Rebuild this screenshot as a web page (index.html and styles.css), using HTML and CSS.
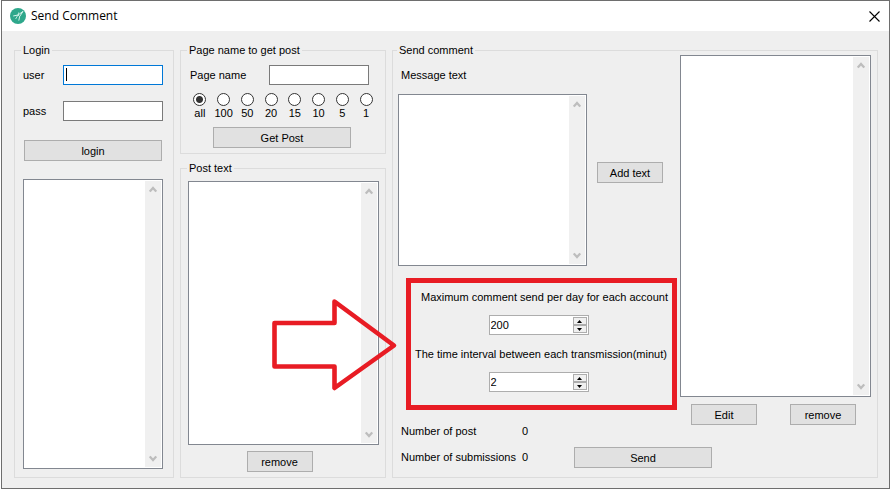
FILE: index.html
```html
<!DOCTYPE html>
<html lang="en">
<head>
    <meta charset="utf-8">
    <title>Send Comment</title>
    <link rel="stylesheet" href="styles.css">
</head>
<body>
    <svg class="defs" width="0" height="0">
        <symbol id="up" viewBox="0 0 8 7"><path d="M0.8 5.6 L4 2 L7.2 5.6" fill="none" stroke="#bdbdbd" stroke-width="2.2"/></symbol>
        <symbol id="down" viewBox="0 0 8 7"><path d="M0.8 1.4 L4 5 L7.2 1.4" fill="none" stroke="#bdbdbd" stroke-width="2.2"/></symbol>
    </svg>
    <div class="window">
        <header class="titlebar">
            <svg class="logo" viewBox="0 0 16 16">
                <circle cx="8" cy="8" r="8" fill="#2ea78b"/>
                <path d="M3.2 8 L8 7 L13 3.4 L9.6 8.6 L8.8 12.6" fill="none" stroke="#d5f3ea" stroke-width="1"/>
                <path d="M8.8 4.4 L8 7 L9.6 8.6 M8 7 L5.6 11" fill="none" stroke="#d5f3ea" stroke-width="0.8"/>
            </svg>
            <h1>Send Comment</h1>
            <button class="close" aria-label="Close">
                <svg width="11" height="11" viewBox="0 0 11 11"><path d="M0.5 0.5 L10.5 10.5 M10.5 0.5 L0.5 10.5" stroke="#000" stroke-width="1.1"/></svg>
            </button>
        </header>

        <main class="content">
            <fieldset class="group login">
                <legend>Login</legend>
                <div class="row">
                    <label for="user">user</label>
                    <input type="text" id="user" class="text active">
                </div>
                <div class="row">
                    <label for="pass">pass</label>
                    <input type="password" id="pass" class="text">
                </div>
                <button class="btn">login</button>
                <div class="box">
                    <select size="2" aria-label="Accounts"></select>
                    <div class="bar"><svg><use href="#up"/></svg><svg><use href="#down"/></svg></div>
                </div>
            </fieldset>

            <div class="middle">
                <fieldset class="group page">
                    <legend>Page name to get post</legend>
                    <div class="row">
                        <label for="pagename">Page name</label>
                        <input type="text" id="pagename" class="text">
                    </div>
                    <div class="radios">
                        <label><input type="radio" name="count" checked>all</label>
                        <label><input type="radio" name="count">100</label>
                        <label><input type="radio" name="count">50</label>
                        <label><input type="radio" name="count">20</label>
                        <label><input type="radio" name="count">15</label>
                        <label><input type="radio" name="count">10</label>
                        <label><input type="radio" name="count">5</label>
                        <label><input type="radio" name="count">1</label>
                    </div>
                    <button class="btn wide">Get Post</button>
                </fieldset>
                <fieldset class="group posts">
                    <legend>Post text</legend>
                    <div class="box">
                        <select size="2" aria-label="Post text"></select>
                        <div class="bar"><svg><use href="#up"/></svg><svg><use href="#down"/></svg></div>
                    </div>
                    <button class="btn small">remove</button>
                </fieldset>
            </div>

            <fieldset class="group send">
                <legend>Send comment</legend>
                <div class="columns">
                    <div class="compose">
                        <label class="caption" for="message">Message text</label>
                        <div class="message">
                            <div class="box">
                                <textarea id="message"></textarea>
                                <div class="bar"><svg><use href="#up"/></svg><svg><use href="#down"/></svg></div>
                            </div>
                            <button class="btn small">Add text</button>
                        </div>
                        <div class="limits">
                            <label class="max" for="max">Maximum comment send per day for each account</label>
                            <div class="spinner">
                                <input type="number" id="max" value="200">
                                <div class="steps">
                                    <button aria-label="Increase"><svg viewBox="0 0 5 3"><path d="M0 3 L2.5 0 L5 3Z"/></svg></button>
                                    <button aria-label="Decrease"><svg viewBox="0 0 5 3"><path d="M0 0 L2.5 3 L5 0Z"/></svg></button>
                                </div>
                            </div>
                            <label class="interval" for="interval">The time interval between each transmission(minut)</label>
                            <div class="spinner">
                                <input type="number" id="interval" value="2">
                                <div class="steps">
                                    <button aria-label="Increase"><svg viewBox="0 0 5 3"><path d="M0 3 L2.5 0 L5 3Z"/></svg></button>
                                    <button aria-label="Decrease"><svg viewBox="0 0 5 3"><path d="M0 0 L2.5 3 L5 0Z"/></svg></button>
                                </div>
                            </div>
                            <svg class="arrow" viewBox="0 0 130 98">
                                <path d="M6.5 27 H66.5 V5.5 L126 49.5 L66.5 92 V70.5 H6.5 Z" fill="none" stroke="#e81c24" stroke-width="4.6" stroke-linejoin="round"/>
                            </svg>
                        </div>
                    </div>
                    <div class="queue">
                        <div class="box">
                            <select size="2" aria-label="Messages"></select>
                            <div class="bar"><svg><use href="#up"/></svg><svg><use href="#down"/></svg></div>
                        </div>
                        <div class="actions">
                            <button class="btn small">Edit</button>
                            <button class="btn small">remove</button>
                        </div>
                    </div>
                </div>
                <div class="footer">
                    <dl>
                        <dt>Number of post</dt><dd>0</dd>
                        <dt>Number of submissions</dt><dd>0</dd>
                    </dl>
                    <button class="btn wide">Send</button>
                </div>
            </fieldset>
        </main>
    </div>
</body>
</html>
```
FILE: styles.css
```css
* {
    box-sizing: border-box;
}
body {
    margin: 0;
    background: #fff;
    color: #000;
    font-family: "Liberation Sans", Arial, sans-serif;
    font-size: 11px;
    line-height: 12px;
}
input, button, select, textarea {
    font: inherit;
    color: inherit;
    margin: 0;
    padding: 0;
    border-radius: 0;
}
.defs {
    position: absolute;
}
.window {
    display: flex;
    flex-direction: column;
    min-height: 100vh;
    margin-left: 1px;
    border: 1px solid #6e6e6e;
    background: #efefef;
}

/* title bar */
.titlebar {
    display: flex;
    align-items: center;
    height: 30px;
    padding: 0 9px 0 8px;
    background: #fff;
}
.logo {
    width: 16px;
    height: 16px;
    margin-right: 5px;
}
.titlebar h1 {
    flex: 1;
    margin: 0;
    font: 12px/16px "Open Sans", "Noto Sans", sans-serif;
}
.close {
    display: flex;
    border: 0;
    background: none;
}

/* groups */
.content {
    flex: 1;
    display: grid;
    grid-template-columns: 160px 206px 1fr;
    gap: 6px;
    padding: 14px 11px 10px 12px;
}
.group {
    display: flex;
    flex-direction: column;
    min-width: 0;
    margin: 0;
    border: 1px solid #dcdcdc;
}
legend {
    margin-left: -1px;
    padding: 0 2px;
    line-height: 10px;
}
.row {
    display: flex;
    align-items: center;
    justify-content: space-between;
}
.text {
    width: 100px;
    height: 20px;
    padding: 0 4px;
    border: 1px solid #7a7a7a;
    background: #fff;
}
.active {
    border-color: #0078d7;
    background: linear-gradient(#000, #000) 2px 2px / 1px 13px no-repeat #fff;
}
.btn {
    height: 21px;
    border: 1px solid #adadad;
    background: #e1e1e1;
}
.small {
    width: 66px;
}
.wide {
    width: 138px;
}

/* white boxes with a disabled scrollbar */
.box {
    flex: 1;
    display: flex;
    min-height: 0;
    padding: 1px;
    border: 1px solid #828790;
    background: #fff;
}
.box select, .box textarea {
    flex: 1;
    min-width: 0;
    height: auto;
    border: 0;
    background: none;
    resize: none;
    outline: none;
    overflow: hidden;
}
.bar {
    display: flex;
    flex-direction: column;
    align-items: center;
    justify-content: space-between;
    width: 16px;
    padding: 5px 0;
    background: #f0f0f0;
}
.bar svg {
    width: 8px;
    height: 7px;
}

.login {
    padding: 10px 10px 8px 8px;
}
.login legend {
    margin-left: -2px;
}
.login .row {
    margin-bottom: 16px;
}
.login .btn {
    margin: 3px 1px 18px;
}

.middle {
    display: flex;
    flex-direction: column;
    gap: 9px;
}
.page {
    padding: 10px 7px 5px;
}
.page .row {
    padding: 0 9px 0 2px;
}
.page .wide {
    align-self: center;
    margin-right: 2px;
}
.radios {
    display: grid;
    grid-template-columns: repeat(8, 1fr);
    margin: 8px 0;
}
.radios label {
    display: flex;
    flex-direction: column;
    align-items: center;
    gap: 1px;
}
.radios input {
    appearance: none;
    width: 13px;
    height: 13px;
    border: 1px solid #333;
    border-radius: 50%;
    background: #fff;
}
.radios input:checked {
    background: radial-gradient(circle, #333 3px, #fff 4px);
}
.posts {
    flex: 1;
    padding: 8px 6px 5px 7px;
}
.posts .btn {
    align-self: center;
    margin: 6px 8px 0 0;
}

.send {
    padding: 0 6px 9px 5px;
}
.columns {
    flex: 1;
    display: grid;
    grid-template-columns: 1fr 191px;
    gap: 3px;
}
.compose {
    display: flex;
    flex-direction: column;
}
.caption {
    margin: 14px 0 13px 3px;
}
.message {
    flex: 1;
    display: flex;
    align-items: center;
    gap: 10px;
    margin-right: 14px;
}
.message .box {
    align-self: stretch;
}
.message .btn {
    margin-bottom: 15px;
}
.limits {
    position: relative;
    display: flex;
    flex-direction: column;
    align-items: center;
    margin: 12px 0 15px 8px;
    padding: 8px 4px 0;
    border: 5px solid #e81c24;
    white-space: nowrap;
}
.max {
    align-self: flex-end;
}
.interval {
    align-self: flex-start;
}
.spinner {
    display: flex;
    width: 100px;
    height: 20px;
    margin: 12px 6px 13px 0;
    padding: 1px;
    border: 1px solid #adadad;
    background: #fff;
}
.spinner input {
    flex: 1;
    min-width: 0;
    border: 0;
    background: none;
    appearance: textfield;
}
.spinner input::-webkit-inner-spin-button {
    display: none;
}
.steps {
    display: flex;
    flex-direction: column;
    width: 14px;
}
.steps button {
    flex: 1;
    display: flex;
    align-items: center;
    justify-content: center;
    border: 1px solid #adadad;
    background: #f0f0f0;
}
.steps svg {
    width: 5px;
    height: 3px;
}
/* points from the post list to the limits */
.arrow {
    position: absolute;
    top: 13px;
    left: -143px;
    width: 130px;
    height: 98px;
    pointer-events: none;
}

.queue {
    display: flex;
    flex-direction: column;
}
.actions {
    display: flex;
    justify-content: space-between;
    padding: 7px 15px 0 11px;
}
.footer {
    display: flex;
    align-items: flex-end;
}
dl {
    display: grid;
    grid-template-columns: 121px 1fr;
    row-gap: 14px;
    width: 173px;
    margin: 0 0 5px 3px;
}
dd {
    margin: 0;
}
```
